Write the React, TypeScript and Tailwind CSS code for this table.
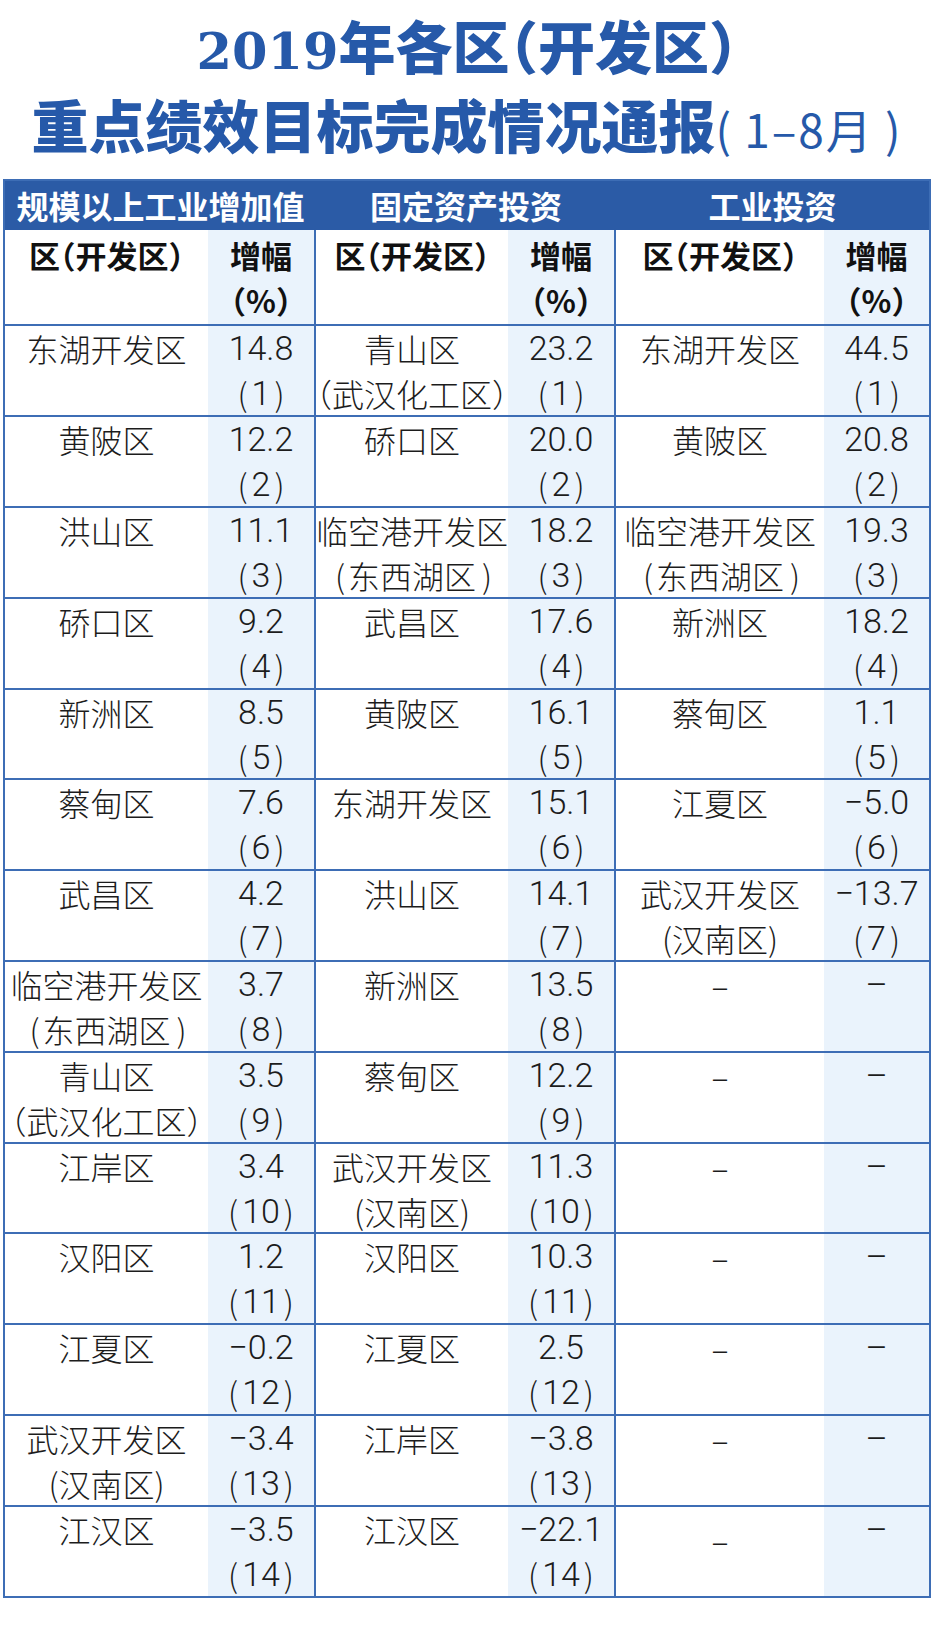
import React from "react";

type Cell = { name: string[]; value: string; rank: string; dashLow?: boolean };

const left: Cell[] = [
  { name: ["东湖开发区"], value: "14.8", rank: "1" },
  { name: ["黄陂区"], value: "12.2", rank: "2" },
  { name: ["洪山区"], value: "11.1", rank: "3" },
  { name: ["硚口区"], value: "9.2", rank: "4" },
  { name: ["新洲区"], value: "8.5", rank: "5" },
  { name: ["蔡甸区"], value: "7.6", rank: "6" },
  { name: ["武昌区"], value: "4.2", rank: "7" },
  { name: ["临空港开发区", "FW东西湖区"], value: "3.7", rank: "8" },
  { name: ["青山区", "HALT（武汉化工区）"], value: "3.5", rank: "9" },
  { name: ["江岸区"], value: "3.4", rank: "10" },
  { name: ["汉阳区"], value: "1.2", rank: "11" },
  { name: ["江夏区"], value: "−0.2", rank: "12" },
  { name: ["武汉开发区", "(汉南区)"], value: "−3.4", rank: "13" },
  { name: ["江汉区"], value: "−3.5", rank: "14" },
];

const mid: Cell[] = [
  { name: ["青山区", "HALT（武汉化工区）"], value: "23.2", rank: "1" },
  { name: ["硚口区"], value: "20.0", rank: "2" },
  { name: ["临空港开发区", "FW东西湖区"], value: "18.2", rank: "3" },
  { name: ["武昌区"], value: "17.6", rank: "4" },
  { name: ["黄陂区"], value: "16.1", rank: "5" },
  { name: ["东湖开发区"], value: "15.1", rank: "6" },
  { name: ["洪山区"], value: "14.1", rank: "7" },
  { name: ["新洲区"], value: "13.5", rank: "8" },
  { name: ["蔡甸区"], value: "12.2", rank: "9" },
  { name: ["武汉开发区", "(汉南区)"], value: "11.3", rank: "10" },
  { name: ["汉阳区"], value: "10.3", rank: "11" },
  { name: ["江夏区"], value: "2.5", rank: "12" },
  { name: ["江岸区"], value: "−3.8", rank: "13" },
  { name: ["江汉区"], value: "−22.1", rank: "14" },
];

const right: Cell[] = [
  { name: ["东湖开发区"], value: "44.5", rank: "1" },
  { name: ["黄陂区"], value: "20.8", rank: "2" },
  { name: ["临空港开发区", "FW东西湖区"], value: "19.3", rank: "3" },
  { name: ["新洲区"], value: "18.2", rank: "4" },
  { name: ["蔡甸区"], value: "1.1", rank: "5" },
  { name: ["江夏区"], value: "−5.0", rank: "6" },
  { name: ["武汉开发区", "(汉南区)"], value: "−13.7", rank: "7" },
  { name: ["–"], value: "–", rank: "" },
  { name: ["–"], value: "–", rank: "" },
  { name: ["–"], value: "–", rank: "" },
  { name: ["–"], value: "–", rank: "" },
  { name: ["–"], value: "–", rank: "" },
  { name: ["–"], value: "–", rank: "" },
  { name: ["–"], value: "–", rank: "", dashLow: true },
];

function OpenP({ wide }: { wide?: boolean }) {
  return (
    <span
      className={`inline-block w-[32px] text-right font-['Noto_Sans_CJK_SC',sans-serif] text-[32px] font-light ${wide ? "pr-[4px]" : "pr-[3px]"}`}
    >
      (
    </span>
  );
}
function CloseP({ wide }: { wide?: boolean }) {
  return (
    <span
      className={`inline-block w-[32px] text-left font-['Noto_Sans_CJK_SC',sans-serif] text-[32px] font-light ${wide ? "pl-[4px]" : "pl-[6px]"}`}
    >
      )
    </span>
  );
}

function NameLines({ lines, low }: { lines: string[]; low?: boolean }) {
  return (
    <div className={low ? "pt-[10px]" : ""}>
      {lines.map((l, i) =>
        l.startsWith("HALT") ? (
          <div key={i} className="[font-feature-settings:'halt']">
            {l.slice(4)}
          </div>
        ) : l.startsWith("FW") ? (
          <div key={i}>
            <OpenP />
            {l.slice(2)}
            <CloseP />
          </div>
        ) : (
          <div key={i}>{l}</div>
        )
      )}
    </div>
  );
}

function ValueLines({ value, rank }: { value: string; rank: string }) {
  return (
    <div className="font-['Roboto','Noto_Sans_CJK_SC',sans-serif] text-[34px]">
      <div>{value}</div>
      {rank && (
        <div className="flex justify-center">
          <OpenP wide />
          <span>{rank}</span>
          <CloseP wide />
        </div>
      )}
    </div>
  );
}

const BORDER = "border-[#3d6db5]";

export default function App() {
  const rows = left.map((l, i) => ({ l, m: mid[i], r: right[i] }));
  return (
    <div className="w-[934px] min-h-[1634px] bg-white">
      <div className="pt-[8px] text-center text-[#2659a9] font-['Noto_Sans_CJK_SC',sans-serif]">
        <div className="leading-[72px] text-[57px] font-black whitespace-nowrap [font-feature-settings:'halt']">
          <span className="font-['DejaVu_Serif',serif] font-bold text-[51px]">2019</span>
          年各区（开发区）
        </div>
        <div className="leading-[72px] text-[57px] font-black whitespace-nowrap">
          重点绩效目标完成情况通报
          <span className="font-normal text-[46px] tracking-[2px]">(&#8201;1–8月&#8201;)</span>
        </div>
      </div>

      <div
        className={`mt-[15px] ml-[3px] w-[928px] border-2 ${BORDER} font-['Noto_Sans_CJK_SC',sans-serif]`}
      >
        <div className="flex h-[49px] bg-[#2b5ba6] text-white font-bold text-[32px] leading-[49px] whitespace-nowrap">
          <div className="w-[311px] text-center">规模以上工业增加值</div>
          <div className="w-[300px] text-center">固定资产投资</div>
          <div className="w-[313px] text-center">工业投资</div>
        </div>

        <div className="flex h-[94px] text-[31px] font-bold leading-[45px] text-[#111] whitespace-nowrap">
          <div className="w-[203px] pt-[2px] text-center [font-feature-settings:'halt']">区（开发区）</div>
          <div className={`w-[108px] pt-[2px] text-center bg-[#eaf3fc] border-r-2 ${BORDER} [font-feature-settings:'halt']`}>
            <div>增幅</div>
            <div>（%）</div>
          </div>
          <div className="w-[192px] pt-[2px] text-center [font-feature-settings:'halt']">区（开发区）</div>
          <div className={`w-[108px] pt-[2px] text-center bg-[#eaf3fc] border-r-2 ${BORDER} [font-feature-settings:'halt']`}>
            <div>增幅</div>
            <div>（%）</div>
          </div>
          <div className="w-[208px] pt-[2px] text-center [font-feature-settings:'halt']">区（开发区）</div>
          <div className="w-[105px] pt-[2px] text-center bg-[#eaf3fc] [font-feature-settings:'halt']">
            <div>增幅</div>
            <div>（%）</div>
          </div>
        </div>

        {rows.map(({ l, m, r }, i) => (
          <div
            key={i}
            className={`flex ${i % 5 === 4 ? "h-[90px]" : "h-[91px]"} border-t-2 ${BORDER} text-[32px] font-light leading-[45px] text-[#1c1c1c] whitespace-nowrap`}
          >
            <div className="w-[203px] text-center">
              <NameLines lines={l.name} />
            </div>
            <div className={`w-[108px] text-center bg-[#eaf3fc] border-r-2 ${BORDER}`}>
              <ValueLines value={l.value} rank={l.rank} />
            </div>
            <div className="w-[192px] text-center">
              <NameLines lines={m.name} />
            </div>
            <div className={`w-[108px] text-center bg-[#eaf3fc] border-r-2 ${BORDER}`}>
              <ValueLines value={m.value} rank={m.rank} />
            </div>
            <div className="w-[208px] text-center">
              <NameLines lines={r.name} low={r.dashLow} />
            </div>
            <div className="w-[105px] text-center bg-[#eaf3fc]">
              <ValueLines value={r.value} rank={r.rank} />
            </div>
          </div>
        ))}
      </div>
    </div>
  );
}
